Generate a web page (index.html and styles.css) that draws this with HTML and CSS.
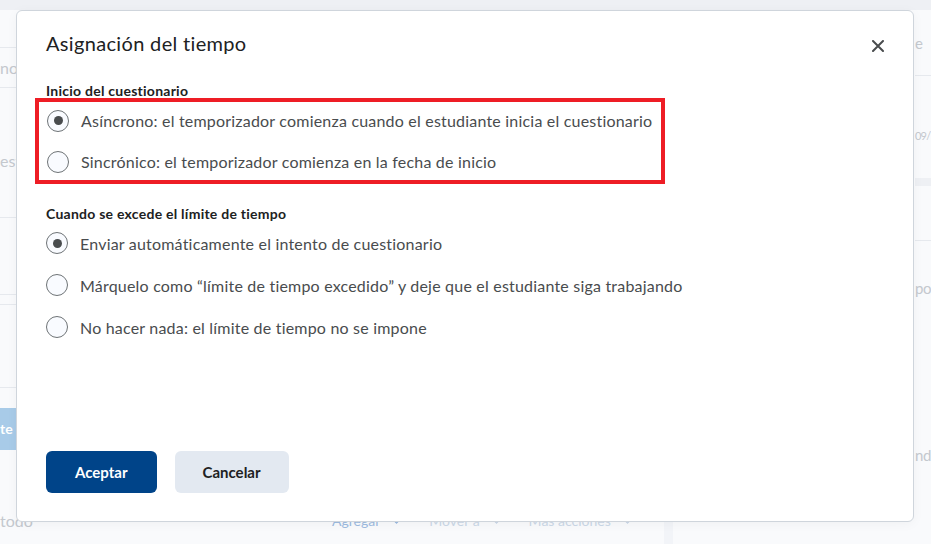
FILE: index.html
```html
<!DOCTYPE html>
<html lang="es">
<head>
    <meta charset="UTF-8">
    <title>Asignación del tiempo</title>
    <link rel="stylesheet" href="styles.css">
</head>
<body>
    <div class="page">
        <div class="page-top"></div>
        <div class="page-body">
            <div class="main">
                <div class="row row-a"></div>
                <div class="row row-b"><span class="faded">no</span></div>
                <div class="row row-c"><span class="faded">est</span></div>
                <div class="row row-d"></div>
                <div class="row row-e"></div>
                <div class="row row-f"></div>
                <div class="row-btn"><span class="ghost-btn">te</span></div>
                <div class="toolbar">
                    <span class="faded todo">todo</span>
                    <span class="tool tool-add">Agregar <span class="chev"></span></span>
                    <span class="tool">Mover a <span class="chev"></span></span>
                    <span class="tool">Más acciones <span class="chev"></span></span>
                </div>
            </div>
            <div class="divider"></div>
            <div class="side">
                <div class="side-row side-a"><span class="faded">e</span></div>
                <div class="side-row side-b"><span class="faded date">09/</span></div>
                <div class="side-band"></div>
                <div class="side-row side-c"></div>
                <div class="side-row side-d"><span class="faded">po</span></div>
                <div class="side-row side-e"><span class="faded">nd</span></div>
            </div>
        </div>
    </div>

    <div class="dialog">
        <div class="dialog-head">
            <h2>Asignación del tiempo</h2>
            <button class="close" aria-label="Cerrar">
                <svg width="12" height="12" viewBox="0 0 12 12">
                    <path d="M1 1 L11 11 M11 1 L1 11" stroke="#494c4e" stroke-width="2" stroke-linecap="round"/>
                </svg>
            </button>
        </div>

        <div class="group-label first-label">Inicio del cuestionario</div>
        <div class="highlight">
            <label class="option"><span class="radio checked"></span>Asíncrono: el temporizador comienza cuando el estudiante inicia el cuestionario</label>
            <label class="option"><span class="radio"></span>Sincrónico: el temporizador comienza en la fecha de inicio</label>
        </div>

        <div class="group-label second-label">Cuando se excede el límite de tiempo</div>
        <div class="options">
            <label class="option"><span class="radio checked"></span>Enviar automáticamente el intento de cuestionario</label>
            <label class="option"><span class="radio"></span>Márquelo como “límite de tiempo excedido” y deje que el estudiante siga trabajando</label>
            <label class="option"><span class="radio"></span>No hacer nada: el límite de tiempo no se impone</label>
        </div>

        <div class="dialog-foot">
            <button class="btn btn-primary">Aceptar</button>
            <button class="btn btn-secondary">Cancelar</button>
        </div>
    </div>
</body>
</html>
```

FILE: styles.css
```css
body {
    margin: 0;
    font-family: Lato, "Noto Sans", sans-serif;
    background-color: #f9fafc;
    overflow: hidden;
}

/* faded page behind the dialog */
.page {
    height: 544px;
    display: flex;
    flex-direction: column;
}

.page-top {
    height: 10px;
    flex-shrink: 0;
    background-color: #eef0f4;
}

.page-body {
    flex: 1;
    display: flex;
    overflow: hidden;
}

.main {
    width: 664px;
    flex-shrink: 0;
}

.divider {
    width: 9px;
    flex-shrink: 0;
    background-color: #f2f4f8;
}

.side {
    flex: 1;
    min-width: 0;
    overflow: hidden;
    padding-left: 242px;
}

.faded {
    color: #c4c8ce;
    font-size: 16px;
}

.side .faded {
    font-size: 15px;
    letter-spacing: -0.3px;
    white-space: nowrap;
}

.side .date {
    font-size: 11px;
    letter-spacing: -0.8px;
}

.row {
    display: flex;
    align-items: center;
    box-sizing: border-box;
    border-bottom: 1px solid #e6e9ee;
}

.row-a { height: 38px; }
.row-b { height: 40px; }
.row-c { height: 130px; padding-top: 16px; }
.row-d { height: 77px; }
.row-e { height: 10px; }
.row-f { height: 83px; }

.row-btn {
    height: 116px;
    padding-top: 20px;
    box-sizing: border-box;
}

.ghost-btn {
    display: inline-block;
    height: 42px;
    line-height: 42px;
    width: 16px;
    background-color: #a8cbe8;
    color: #ffffff;
    font-weight: 700;
    font-size: 14px;
}

.toolbar {
    display: flex;
    align-items: center;
    height: 30px;
    margin-top: 1px;
}

.todo {
    width: 332px;
}

.tool {
    color: #cbd8e7;
    font-size: 14px;
    margin-right: 28px;
    display: flex;
    align-items: center;
    gap: 12px;
}

.tool-add {
    color: #9dbbe0;
}

.chev {
    width: 6px;
    height: 6px;
    border-right: 3px solid currentColor;
    border-bottom: 3px solid currentColor;
    transform: rotate(45deg);
    margin-top: -5px;
}

.side-row {
    display: flex;
    align-items: center;
    box-sizing: border-box;
}

.side-a { height: 66px; border-bottom: 1px solid #e6e9ee; }
.side-b { height: 102px; padding-top: 16px; }
.side-band { height: 8px; background-color: #eef0f4; }
.side-c { height: 55px; border-bottom: 1px solid #e6e9ee; }
.side-d { height: 94px; }
.side-e { height: 240px; }

/* dialog */
.dialog {
    position: absolute;
    left: 16px;
    top: 10px;
    width: 898px;
    height: 512px;
    box-sizing: border-box;
    background-color: #ffffff;
    border: 1px solid #cfd5dc;
    border-radius: 6px;
    box-shadow: 0 2px 12px rgba(0, 0, 0, 0.04);
    padding: 18px 29px 28px 29px;
    display: flex;
    flex-direction: column;
}

.dialog-head {
    display: flex;
    justify-content: space-between;
    align-items: flex-start;
}

.dialog-head h2 {
    margin: 0;
    font-size: 20px;
    line-height: 28px;
    font-weight: 400;
    letter-spacing: 0.33px;
    color: #202122;
}

.close {
    border: none;
    background: none;
    padding: 0;
    margin-top: 11px;
    width: 12px;
    height: 12px;
    display: flex;
    cursor: pointer;
}

.group-label {
    font-size: 14px;
    line-height: 16px;
    font-weight: 700;
    letter-spacing: 0.25px;
    color: #202122;
}

.first-label {
    margin-top: 26px;
}

.second-label {
    margin-top: 22px;
}

.highlight {
    margin-left: -11px;
    margin-top: -1px;
    width: 630px;
    box-sizing: border-box;
    border: 4px solid #ee1d25;
    padding-left: 8px;
    display: flex;
    flex-direction: column;
    gap: 4px;
}

.option {
    display: flex;
    align-items: center;
    gap: 12px;
    height: 42px;
    font-size: 16px;
    letter-spacing: 0.2px;
    color: #494c4e;
    cursor: pointer;
}

.highlight .option {
    height: 37px;
}

.radio {
    width: 22px;
    height: 22px;
    box-sizing: border-box;
    border: 1px solid #6e7376;
    border-radius: 50%;
    background-color: #f9fbff;
    display: flex;
    align-items: center;
    justify-content: center;
    flex-shrink: 0;
}

.radio.checked::after {
    content: "";
    width: 9px;
    height: 9px;
    border-radius: 50%;
    background-color: #494c4e;
}

.dialog-foot {
    margin-top: auto;
    display: flex;
    gap: 18px;
}

.btn {
    height: 42px;
    padding: 0 29px;
    border: none;
    border-radius: 6px;
    font-family: Lato, "Noto Sans", sans-serif;
    font-size: 15px;
    font-weight: 700;
    cursor: pointer;
}

.btn-primary {
    background-color: #004489;
    color: #ffffff;
}

.btn-secondary {
    padding: 0 28px;
    background-color: #e3e9f1;
    color: #202122;
}
```
